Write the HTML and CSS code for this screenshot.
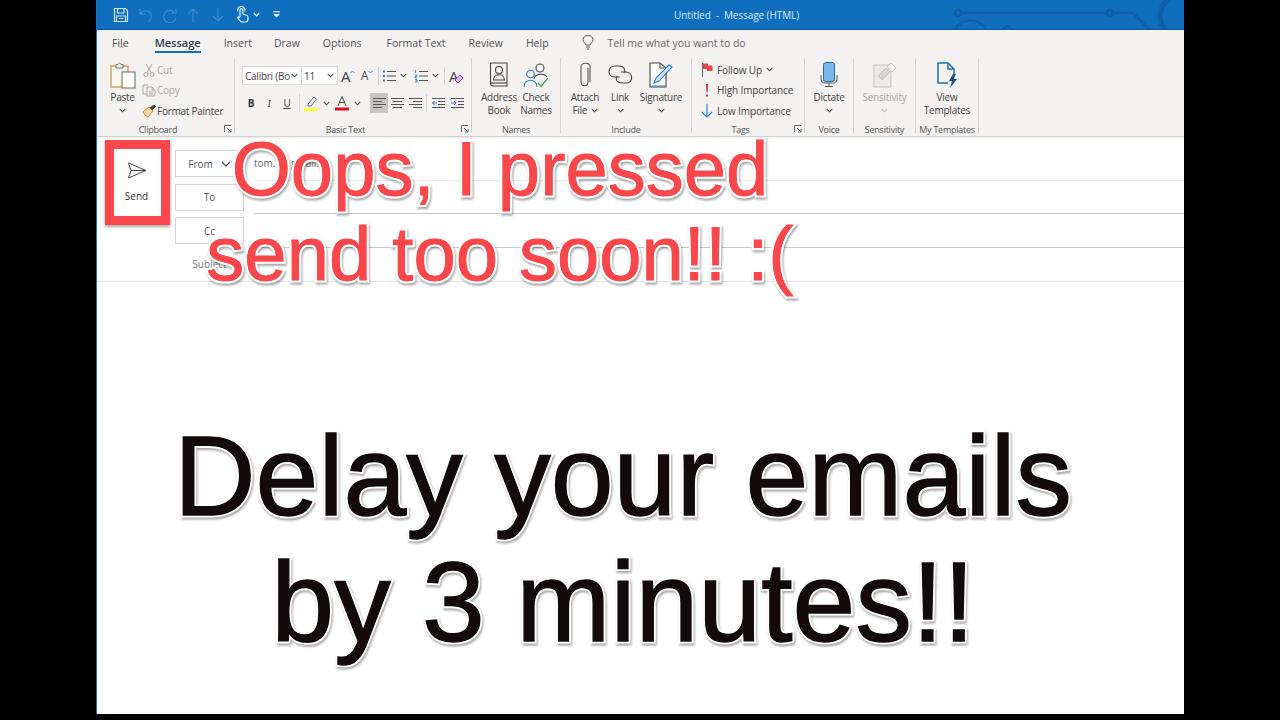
FILE: index.html
```html
<!DOCTYPE html>
<html lang="en">
<head>
    <meta charset="UTF-8">
    <meta name="viewport" content="width=device-width, initial-scale=1.0">
    <title>Untitled - Message (HTML)</title>
    <link rel="stylesheet" href="styles.css">
</head>
<body>

<div class="window">

    <!-- Title bar -->
    <header class="titlebar">
        <svg class="circuit" width="240" height="30" viewBox="0 0 240 30" fill="none" stroke="#0f5ea6" stroke-width="2.5">
            <circle cx="15" cy="13" r="3"/>
            <path d="M18 13H163M170 13H190L207 30"/>
            <circle cx="167" cy="13" r="3"/>
            <path d="M12 31C16 17 38 17 44 31M58 31L64 26L72 31"/>
            <path d="M224 32C212 20 216 2 232 -4" stroke-width="5"/>
        </svg>
        <div class="qat">
            <svg class="qat-save" width="16" height="16" viewBox="0 0 16 16" fill="none" stroke="#cfe3f5" stroke-width="1.2">
                <path d="M1.5 1.5H12.5L14.5 3.5V14.5H1.5Z"/>
                <path d="M4.5 1.5V6H11V1.5M3.5 14.5V9H12.5V14.5M5.5 11.5H10.5"/>
            </svg>
            <svg class="qat-undo" width="14" height="16" viewBox="0 0 14 16" fill="none" stroke="#3f8ccd" stroke-width="1.2">
                <path d="M1 2V7H6M1.5 6.5C4 3.5 8 3 10.5 5C13.5 8 13 12 9 15"/>
            </svg>
            <svg class="qat-redo" width="16" height="16" viewBox="0 0 16 16" fill="none" stroke="#3f8ccd" stroke-width="1.2">
                <path d="M14 2V6H10M13 6A6.3 6.3 0 1 0 14 11"/>
            </svg>
            <svg class="qat-up" width="12" height="16" viewBox="0 0 12 16" fill="none" stroke="#3f8ccd" stroke-width="1.2">
                <path d="M6 15V2M1 7L6 2L11 7"/>
            </svg>
            <svg class="qat-down" width="12" height="16" viewBox="0 0 12 16" fill="none" stroke="#3f8ccd" stroke-width="1.2">
                <path d="M6 1V14M1 9L6 14L11 9"/>
            </svg>
            <svg class="qat-touch" width="14" height="17" viewBox="0 0 14 17" fill="none" stroke="#e4f0fa" stroke-width="1.2">
                <path d="M5 11V4A1.4 1.4 0 0 1 7.8 4V8L11.5 9.2C12.5 9.6 13 10.2 13 11.2V13C13 15 11.8 16 10 16H7.5C6.5 16 5.8 15.5 5 14.6L2.5 11.8C3.2 10.6 4.2 10.6 5 11.5"/>
                <path d="M3 5.5A3.6 3.6 0 1 1 9.6 5.5"/>
            </svg>
            <svg class="qat-chev" width="7" height="5" viewBox="0 0 7 5" fill="none" stroke="#e4f0fa" stroke-width="1.2"><path d="M.8 1L3.5 3.8L6.2 1"/></svg>
            <svg class="qat-more" width="7" height="7" viewBox="0 0 7 7" fill="none" stroke="#e4f0fa" stroke-width="1.1"><path d="M0 .8H7"/><path d="M.8 3L3.5 5.8L6.2 3" fill="#e4f0fa"/></svg>
        </div>
        <div class="window-title">Untitled &nbsp;-&nbsp; Message (HTML)</div>
    </header>

    <!-- Tabs -->
    <nav class="tabs">
        <span class="tab tab-file">File</span>
        <span class="tab tab-message active">Message</span>
        <span class="tab tab-insert">Insert</span>
        <span class="tab tab-draw">Draw</span>
        <span class="tab tab-options">Options</span>
        <span class="tab tab-format">Format Text</span>
        <span class="tab tab-review">Review</span>
        <span class="tab tab-help">Help</span>
        <svg class="tell-icon" width="12" height="15" viewBox="0 0 12 15" fill="none" stroke="#555" stroke-width="1">
            <path d="M3.8 10C3.5 8 1 7.5 1 4.8A5 4.5 0 0 1 11 4.8C11 7.5 8.5 8 8.2 10ZM4.2 12H7.8M5 14H7"/>
        </svg>
        <span class="tell">Tell me what you want to do</span>
    </nav>

    <!-- Ribbon -->
    <section class="ribbon">

        <div class="group g-clipboard">
            <div class="group-body">
                <div class="big b-paste">
                    <div class="big-icon">
                        <svg width="26" height="27" viewBox="0 0 26 27">
                            <rect x="1" y="4" width="17" height="21" fill="#fbf6ee" stroke="#d99b4f" stroke-width="1.4"/>
                            <path d="M6 4.5V2.5H8C8.5 .5 10.500 .5 11 2.500H13V6H6Z" fill="#f3f2f1" stroke="#777"/>
                            <rect x="12" y="10" width="13" height="16" fill="#fff" stroke="#666"/>
                        </svg>
                    </div>
                    <span>Paste</span>
                    <svg class="chev" width="7" height="5" viewBox="0 0 7 5"><path d="M.8 1L3.500 3.800L6.200 1"/></svg>
                </div>
                <div class="small-col">
                    <div class="small disabled">
                        <svg width="14" height="14" viewBox="0 0 14 14" fill="none" stroke="#a9a7a5"><path d="M4 1L9 9.500M10 1L5 9.500"/><circle cx="4" cy="11.500" r="2"/><circle cx="10" cy="11.500" r="2"/></svg>
                        Cut
                    </div>
                    <div class="small disabled">
                        <svg width="14" height="14" viewBox="0 0 14 14" fill="none" stroke="#a9a7a5"><path d="M6 2H1V11H5M5 4H10L13 7V13H5ZM10 4V7H13M7 9H11M7 11H11"/></svg>
                        Copy
                    </div>
                    <div class="small">
                        <svg width="14" height="14" viewBox="0 0 14 14"><path d="M1 8L7 3L11 7L6 13C4 12 2 10 1 8Z" fill="#f6d9a8" stroke="#d9822b"/><path d="M8 4L12 1L13.500 2.500L10 6" fill="#444" stroke="#444"/></svg>
                        Format Painter
                    </div>
                </div>
            </div>
            <div class="group-label"><span>Clipboard</span><svg class="launcher" width="8" height="8" viewBox="0 0 8 8" fill="none" stroke="#666"><path d="M.5 7V.5H7M3 3L7 7M7 4V7H4"/></svg></div>
        </div>

        <div class="group g-basic">
            <div class="group-body basic-rows">
                <div class="tool-row">
                    <div class="combo combo-font">Calibri (Bo<svg class="chev" width="7" height="5" viewBox="0 0 7 5"><path d="M.8 1L3.500 3.800L6.200 1"/></svg></div>
                    <div class="combo combo-size">11<svg class="chev" width="7" height="5" viewBox="0 0 7 5"><path d="M.8 1L3.500 3.800L6.200 1"/></svg></div>
                    <div class="tool w20"><span class="grow">A</span><svg class="mini" width="5" height="4" viewBox="0 0 5 4" fill="none" stroke="#4a8cc7"><path d="M.5 3L2.500 1L4.500 3"/></svg></div>
                    <div class="tool w18"><span class="shrink">A</span><svg class="mini" width="5" height="4" viewBox="0 0 5 4" fill="none" stroke="#4a8cc7"><path d="M.5 1L2.500 3L4.500 1"/></svg></div>
                    <i class="tool-sep ml2"></i>
                    <div class="tool w15 ml2">
                        <svg width="14" height="14" viewBox="0 0 14 14" fill="none" stroke="#555"><path d="M5 2.500H14M5 7H14M5 11.500H14"/><path d="M1 2.500H3M1 7H3M1 11.500H3" stroke="#2b7cd3" stroke-width="2"/></svg>
                    </div>
                    <div class="tool w15"><svg class="chev" width="7" height="5" viewBox="0 0 7 5"><path d="M.8 1L3.500 3.800L6.200 1"/></svg></div>
                    <div class="tool w20">
                        <svg width="14" height="14" viewBox="0 0 14 14" fill="none" stroke="#555"><path d="M5 2.500H14M5 7H14M5 11.500H14"/><path d="M1.500 1V4M1 6H3V7.500H1V9H3M1 10.500H3V13H1M1.500 11.700H3" stroke="#2b7cd3" stroke-width=".8"/></svg>
                    </div>
                    <div class="tool w8"><svg class="chev" width="7" height="5" viewBox="0 0 7 5"><path d="M.8 1L3.500 3.800L6.200 1"/></svg></div>
                    <i class="tool-sep ml5"></i>
                    <div class="tool w22">
                        <span class="clear">A</span>
                        <svg class="eraser" width="8" height="8" viewBox="0 0 8 8"><path d="M0 5L5 0L8 3L3 8Z" fill="#e3b8ee" stroke="#a347ba"/></svg>
                    </div>
                </div>
                <div class="tool-row row-two">
                    <div class="tool w18 tx-bold">B</div>
                    <div class="tool w18 tx-italic">I</div>
                    <div class="tool w18 tx-under">U</div>
                    <i class="tool-sep ml3"></i>
                    <div class="tool w22">
                        <svg width="15" height="16" viewBox="0 0 15 16"><path d="M4 9L10 2L12.500 4L7 11L4 11Z" fill="#fff" stroke="#666"/><path d="M0 13H14V16H0Z" fill="#ffff3b"/></svg>
                    </div>
                    <div class="tool w8"><svg class="chev" width="7" height="5" viewBox="0 0 7 5"><path d="M.8 1L3.500 3.800L6.200 1"/></svg></div>
                    <div class="tool w24">
                        <svg width="14" height="16" viewBox="0 0 14 16"><path d="M3 11L7 1.500L11 11M4.500 7.500H9.500" fill="none" stroke="#444"/><path d="M0 12.500H14V15.500H0Z" fill="#d8121c"/></svg>
                    </div>
                    <div class="tool w6"><svg class="chev" width="7" height="5" viewBox="0 0 7 5"><path d="M.8 1L3.500 3.800L6.200 1"/></svg></div>
                    <div class="tool w18 ml10 tool-on">
                        <svg width="13" height="12" viewBox="0 0 13 12" fill="none" stroke="#555"><path d="M0 1.500H13M0 4.500H9M0 7.500H13M0 10.500H9"/></svg>
                    </div>
                    <div class="tool w18">
                        <svg width="13" height="12" viewBox="0 0 13 12" fill="none" stroke="#555"><path d="M0 1.500H13M2 4.500H11M0 7.500H13M2 10.500H11"/></svg>
                    </div>
                    <div class="tool w18">
                        <svg width="13" height="12" viewBox="0 0 13 12" fill="none" stroke="#555"><path d="M0 1.500H13M4 4.500H13M0 7.500H13M4 10.500H13"/></svg>
                    </div>
                    <i class="tool-sep ml2"></i>
                    <div class="tool w22">
                        <svg width="13" height="12" viewBox="0 0 13 12" fill="none" stroke="#555"><path d="M0 1.500H13M6 4.500H13M6 7.500H13M0 10.500H13"/><path d="M5 6H.5M2.500 4L.5 6L2.500 8" stroke="#2b7cd3"/></svg>
                    </div>
                    <div class="tool w16">
                        <svg width="13" height="12" viewBox="0 0 13 12" fill="none" stroke="#555"><path d="M0 1.500H13M7 4.500H13M7 7.500H13M0 10.500H13"/><path d="M0 6H5M3 4L5 6L3 8" stroke="#2b7cd3"/></svg>
                    </div>
                </div>
            </div>
            <div class="group-label"><span>Basic Text</span><svg class="launcher" width="8" height="8" viewBox="0 0 8 8" fill="none" stroke="#666"><path d="M.5 7V.5H7M3 3L7 7M7 4V7H4"/></svg></div>
        </div>

        <div class="group g-names">
            <div class="group-body">
                <div class="big b-address">
                    <div class="big-icon">
                        <svg width="20" height="26" viewBox="0 0 20 26" fill="none" stroke="#444" stroke-width="1.100">
                            <path d="M2 1H18V24H4C2.500 24 1.500 23 1.500 21.500V2Z"/><path d="M2 21H18"/>
                            <circle cx="10" cy="8" r="3.500"/><path d="M4.500 18C4.500 11 15.500 11 15.500 18Z"/>
                        </svg>
                    </div>
                    <span>Address<br>Book</span>
                </div>
                <div class="big b-check">
                    <div class="big-icon">
                        <svg width="26" height="26" viewBox="0 0 26 26" fill="none" stroke-width="1.100">
                            <circle cx="17" cy="6" r="4" stroke="#444"/>
                            <path d="M11 17C12 11 22 11 24 15" stroke="#444"/>
                            <circle cx="7.500" cy="12" r="3.800" stroke="#2b7cd3"/>
                            <path d="M1 25C1 16 14 16 14 25" stroke="#2b7cd3"/>
                            <path d="M15 21L18 24.500L25 16" stroke="#4fa34d" stroke-width="1.300"/>
                        </svg>
                    </div>
                    <span>Check<br>Names</span>
                </div>
            </div>
            <div class="group-label"><span>Names</span></div>
        </div>

        <div class="group g-include">
            <div class="group-body">
                <div class="big b-attach">
                    <div class="big-icon">
                        <svg width="12" height="26" viewBox="0 0 12 26" fill="none" stroke="#555" stroke-width="1.100">
                            <path d="M9 6V20C9 25 2 25 2 20V5C2 0 11 0 11 5V20"/>
                        </svg>
                    </div>
                    <span>Attach<br>File <svg class="chev" width="7" height="5" viewBox="0 0 7 5"><path d="M.8 1L3.500 3.800L6.200 1"/></svg></span>
                </div>
                <div class="big b-link">
                    <div class="big-icon">
                        <svg width="25" height="20" viewBox="0 0 25 20" fill="none" stroke="#444" stroke-width="1.100">
                            <path d="M12 12H7C-1 12 -1 1 7 1H11C16 1 18 5 16 8"/>
                            <path d="M13 7H18C25 7 26 18 18 18H14C9 18 7 15 9 11"/>
                        </svg>
                    </div>
                    <span>Link</span>
                    <svg class="chev" width="7" height="5" viewBox="0 0 7 5"><path d="M.8 1L3.500 3.800L6.200 1"/></svg>
                </div>
                <div class="big b-signature">
                    <div class="big-icon">
                        <svg width="24" height="26" viewBox="0 0 24 26" fill="none">
                            <path d="M1 1H11L17 6V25H1Z" fill="#fff" stroke="#444" stroke-width="1.100"/>
                            <path d="M11 1V6H15" stroke="#444"/>
                            <path d="M5 21L7 16L20 3L23 5L10 19Z" fill="#cfe4f7" stroke="#2b7cd3" stroke-width="1.100"/>
                            <path d="M3 24H16" stroke="#2b7cd3"/>
                        </svg>
                    </div>
                    <span>Signature</span>
                    <svg class="chev" width="7" height="5" viewBox="0 0 7 5"><path d="M.8 1L3.500 3.800L6.200 1"/></svg>
                </div>
            </div>
            <div class="group-label"><span>Include</span></div>
        </div>

        <div class="group g-tags">
            <div class="group-body small-col">
                <div class="small">
                    <svg width="12" height="15" viewBox="0 0 12 15"><path d="M1.500 1V15" stroke="#666" fill="none"/><path d="M2 1.500H7V3.500H11.500V9H6V7H2Z" fill="#e8474c"/></svg>
                    Follow Up <svg class="chev tag-chev" width="7" height="5" viewBox="0 0 7 5"><path d="M.8 1L3.500 3.800L6.200 1"/></svg>
                </div>
                <div class="small">
                    <svg width="12" height="15" viewBox="0 0 12 15"><path d="M5 1H7L6.600 9.500H5.400ZM5 11.500H7V13.500H5Z" fill="#e02b33"/></svg>
                    High Importance
                </div>
                <div class="small">
                    <svg width="12" height="15" viewBox="0 0 12 15" fill="none" stroke="#2b7cd3" stroke-width="1.100"><path d="M6 .5V14M1 9L6 14L11 9"/></svg>
                    Low Importance
                </div>
            </div>
            <div class="group-label"><span>Tags</span><svg class="launcher" width="8" height="8" viewBox="0 0 8 8" fill="none" stroke="#666"><path d="M.5 7V.5H7M3 3L7 7M7 4V7H4"/></svg></div>
        </div>

        <div class="group g-voice">
            <div class="group-body center">
                <div class="big">
                    <div class="big-icon">
                        <svg width="18" height="26" viewBox="0 0 18 26" fill="none">
                            <rect x="3.500" y=".5" width="11" height="19" rx="2.500" fill="#79b6f0" stroke="#2b6cb0"/>
                            <path d="M1 13V17C1 20 3 21 5 21H13C15 21 17 20 17 17V13M9 21V24M5 24.500H13" stroke="#555"/>
                        </svg>
                    </div>
                    <span>Dictate</span>
                    <svg class="chev" width="7" height="5" viewBox="0 0 7 5"><path d="M.8 1L3.500 3.800L6.200 1"/></svg>
                </div>
            </div>
            <div class="group-label"><span>Voice</span></div>
        </div>

        <div class="group g-sensitivity">
            <div class="group-body center">
                <div class="big disabled">
                    <div class="big-icon">
                        <svg width="24" height="26" viewBox="0 0 24 26" fill="none" stroke="#c4c2c0">
                            <path d="M1 3H18V25H1Z" fill="#eceae8"/>
                            <path d="M5 14L13 6L17 10L9 18Z" fill="#d8d6d4"/>
                            <path d="M14 5L18 1L23 6L19 10Z" fill="#f3f2f1"/>
                        </svg>
                    </div>
                    <span>Sensitivity</span>
                    <svg class="chev chev-off" width="7" height="5" viewBox="0 0 7 5"><path d="M.8 1L3.500 3.800L6.200 1"/></svg>
                </div>
            </div>
            <div class="group-label"><span>Sensitivity</span></div>
        </div>

        <div class="group g-templates">
            <div class="group-body center">
                <div class="big">
                    <div class="big-icon">
                        <svg width="22" height="27" viewBox="0 0 22 27" fill="none">
                            <path d="M12 21H2V1H12L18 7V12M12 1V7H18" stroke="#1f6fb5" stroke-width="1.500"/>
                            <path d="M17 12L13 19H16L14 26L21 17H17.500L20 12Z" fill="#14558f"/>
                        </svg>
                    </div>
                    <span>View<br>Templates</span>
                </div>
            </div>
            <div class="group-label"><span>My Templates</span></div>
        </div>
    </section>

    <!-- Compose form -->
    <section class="compose">
        <div class="send-box">
            <svg width="20" height="17" viewBox="0 0 20 17" fill="none" stroke="#444" stroke-width="1">
                <path d="M1.500 1L19 8.500L1.500 16L4 8.500ZM4 8.500H19"/>
            </svg>
            <span>Send</span>
        </div>
        <div class="fields">
            <div class="field-row">
                <div class="addr-btn">From <svg class="from-chev" width="10" height="6" viewBox="0 0 10 6" fill="none" stroke="#444" stroke-width="1.100"><path d="M1 1L5 5L9 1"/></svg></div>
                <div class="addr-input light">tom.&nbsp;&nbsp;&nbsp;&nbsp;&nbsp;&nbsp;gmail.co</div>
            </div>
            <div class="field-row">
                <div class="addr-btn">To</div>
                <div class="addr-input"></div>
            </div>
            <div class="field-row">
                <div class="addr-btn">Cc</div>
                <div class="addr-input"></div>
            </div>
            <div class="field-row">
                <div class="subject">Subject</div>
            </div>
        </div>
    </section>

    <div class="body-area"></div>
</div>

<!-- Captions on top of the screenshot -->
<div class="caption caption-red" data-text="Oops, I pressed
send too soon!! :(">Oops, I pressed
send too soon!! :(</div>
<div class="caption caption-black" data-text="Delay your emails
by 3 minutes!!">Delay your emails
by 3 minutes!!</div>

</body>
</html>
```

FILE: styles.css
```css
/* Basic Reset */
* {
    margin: 0;
    padding: 0;
    box-sizing: border-box;
}

body {
    background: #000;
    font-family: 'Open Sans', 'Noto Sans', Arial, sans-serif;
    color: #444;
    width: 1280px;
    height: 720px;
    overflow: hidden;
    position: relative;
}

.window {
    margin-left: 96px;
    width: 1088px;
    height: 714px;
    background: #fff;
    border-left: 1px solid #1f6fb5;
    display: flex;
    flex-direction: column;
}

/* Title bar */
.titlebar {
    height: 30px;
    background: #106ebe;
    border-bottom: 1px solid #0d5a9e;
    color: #d7e8f7;
    display: flex;
    align-items: center;
    position: relative;
    overflow: hidden;
}

.circuit {
    position: absolute;
    left: 846px;
    top: 0;
}

.qat {
    display: flex;
    align-items: center;
    width: 577px;
    padding-left: 16px;
}

.qat-undo { margin-left: 10px; }
.qat-redo { margin-left: 9px; }
.qat-up { margin-left: 9px; }
.qat-down { margin-left: 13px; }
.qat-touch { margin-left: 11px; }
.qat-chev { margin-left: 4px; }
.qat-more { margin-left: 13px; }

.window-title {
    font-size: 10px;
    white-space: nowrap;
    position: relative;
    letter-spacing: -.08px;
}

/* Tabs */
.tabs {
    height: 27px;
    background: #f3f2f1;
    display: flex;
    align-items: center;
    font-size: 10.5px;
    color: #505050;
    padding: 0 0 2px 15px;
}

.tab {
    position: relative;
    white-space: nowrap;
}

.tab.active {
    color: #2f3f4f;
    font-weight: 600;
    font-size: 11px;
}

.tab.active::after {
    content: "";
    position: absolute;
    left: 0;
    right: 0;
    bottom: -3px;
    height: 2px;
    background: #106ebe;
}

.tab-message { margin-left: 26px; }
.tab-insert { margin-left: 23px; }
.tab-draw { margin-left: 22px; }
.tab-options { margin-left: 23px; }
.tab-format { margin-left: 25px; }
.tab-review { margin-left: 23px; }
.tab-help { margin-left: 23px; }
.tell-icon { margin-left: 33px; }
.tell { margin-left: 14px; color: #666; }

/* Ribbon */
.ribbon {
    height: 80px;
    background: #f3f2f1;
    border-bottom: 1px solid #d4d2d0;
    box-shadow: 0 1px 2px rgba(0, 0, 0, 0.08);
    display: flex;
    font-size: 10px;
    letter-spacing: -.25px;
    padding-bottom: 3px;
    position: relative;
}

.group {
    display: flex;
    flex-direction: column;
    border-right: 1px solid #d4d2d0;
    margin-top: 1px;
    padding-top: 1px;
    flex: none;
}

.g-clipboard { width: 138px; }
.g-basic { width: 237px; }
.g-names { width: 89px; }
.g-include { width: 131px; }
.g-tags { width: 113px; letter-spacing: -.12px; }
.g-voice { width: 49px; }
.g-sensitivity { width: 62px; }
.g-templates { width: 63px; }

.group-body {
    flex: 1;
    display: flex;
    min-height: 0;
}

.group-body.center { justify-content: center; }

.g-clipboard .group-body { padding-left: 13px; }
.g-names .group-body { padding-left: 6px; }
.g-include .group-body { padding-left: 6px; }
.g-tags .group-body { padding-left: 9px; }

.group-label {
    height: 14px;
    margin-bottom: -3px;
    display: flex;
    align-items: center;
    font-size: 9px;
    letter-spacing: -.25px;
    color: #555;
    white-space: nowrap;
}

.group-label span {
    flex: 1;
    text-align: center;
}

.launcher {
    margin: 0 2px 0 5px;
    flex: none;
}

/* Big buttons */
.big {
    display: flex;
    flex-direction: column;
    align-items: center;
    text-align: center;
    line-height: 13px;
    flex: none;
    white-space: nowrap;
}

.big .chev { margin-top: 4px; }
.big span .chev { margin: 0 0 1px 1px; }

.big-icon {
    height: 32px;
    display: flex;
    align-items: center;
    justify-content: center;
}

.b-paste { width: 25px; }
.b-address { width: 42px; }
.b-check { width: 32px; }
.b-attach { width: 36px; }
.b-link { width: 34px; }
.b-signature { width: 48px; }

.chev {
    fill: none;
    stroke: #555;
    stroke-width: 1.1;
    flex: none;
}

.chev-off { stroke: #bdbbb9; }
.tag-chev { margin-left: 3px; }

.disabled { color: #a9a7a5; }

/* Small buttons */
.small-col {
    display: flex;
    flex-direction: column;
    margin-left: 7px;
    padding-top: .5px;
}

.small {
    height: 20.5px;
    display: flex;
    align-items: center;
    gap: 1px;
    white-space: nowrap;
}

.g-tags .small svg:first-child { margin-right: 3px; }

.group-body.small-col { margin-left: 0; }

/* Basic text rows */
.basic-rows {
    flex-direction: column;
    padding: 7px 0 0 7px;
    gap: 8px;
}

.tool-row {
    display: flex;
    align-items: center;
    height: 19px;
}

.row-two { height: 20px; }

.combo {
    height: 19px;
    background: #fff;
    border: 1px solid #dcdad8;
    display: flex;
    align-items: center;
    justify-content: space-between;
    padding: 0 3px 0 2px;
    font-size: 10px;
    white-space: nowrap;
    overflow: hidden;
    flex: none;
}

.combo-font { width: 60px; }
.combo-size { width: 36px; border-left: 0; }

.tool {
    height: 20px;
    display: flex;
    align-items: center;
    justify-content: center;
    flex: none;
    position: relative;
}

.w6 { width: 6px; }
.w8 { width: 8px; }
.w15 { width: 15px; }
.w16 { width: 16px; }
.w18 { width: 18px; }
.w20 { width: 20px; }
.w22 { width: 22px; }
.w24 { width: 24px; }
.ml2 { margin-left: 2px; }
.ml3 { margin-left: 3px; }
.ml5 { margin-left: 5px; }
.ml10 { margin-left: 10px; }

.tool-on { background: #c8c6c4; }

.tool-sep {
    width: 1px;
    height: 18px;
    background: #d4d2d0;
    flex: none;
}

.grow { font-size: 15px; color: #444; }
.shrink { font-size: 12px; color: #444; }
.clear { font-size: 15px; color: #444; margin-right: 5px; }

.mini {
    align-self: flex-start;
    margin-top: 4px;
}

.eraser {
    position: absolute;
    right: 4px;
    bottom: 3px;
}

.tx-bold { font-weight: 700; font-size: 10px; color: #333; }
.tx-italic { font-style: italic; font-size: 10px; font-family: 'Liberation Serif', serif; }
.tx-under { text-decoration: underline; font-size: 10px; }

/* Compose form */
.compose {
    height: 145px;
    border-bottom: 1px solid #e4e4e4;
    display: flex;
    align-items: flex-start;
}

.send-box {
    width: 65px;
    height: 85px;
    margin: 3px 0 0 8px;
    border: 9px solid #f9474b;
    box-shadow: 0 2px 3px rgba(0, 0, 0, 0.35);
    display: flex;
    flex-direction: column;
    align-items: center;
    font-size: 10px;
    color: #333;
    padding: 13px 2px 0 0;
    gap: 10px;
    flex: none;
}

.fields {
    flex: 1;
    margin: 10px 0 0 5px;
}

.field-row {
    height: 33.5px;
    display: flex;
    align-items: center;
}

.addr-btn {
    width: 69px;
    height: 27px;
    border: 1px solid #d4d4d4;
    font-size: 10px;
    color: #555;
    display: flex;
    align-items: center;
    justify-content: center;
    gap: 8px;
    flex: none;
}

.from-chev { flex: none; }

.addr-input {
    flex: 1;
    height: 100%;
    margin-left: 10px;
    border-bottom: 1px solid #c8c8c8;
    font-size: 10px;
    color: #666;
    display: flex;
    align-items: center;
    white-space: nowrap;
}

.addr-input.light { border-bottom-color: #ececec; }

.subject {
    width: 69px;
    text-align: center;
    font-size: 10px;
    color: #777;
}

.body-area {
    flex: 1;
}

/* Captions: white outline behind, then a thin stroke on top to fatten the letters */
.caption {
    position: absolute;
    white-space: pre;
    text-align: center;
    font-family: 'Liberation Sans', Arial, sans-serif;
    paint-order: stroke fill;
    -webkit-text-stroke: 5px #fff;
    filter: drop-shadow(1px 2px 1px rgba(0, 0, 0, 0.35));
}

.caption::after {
    content: attr(data-text);
    position: absolute;
    left: 0;
    right: 0;
    top: 0;
}

.caption-red {
    left: 100px;
    width: 800px;
    top: 126px;
    font-size: 76px;
    line-height: 85px;
    color: #f9474b;
}

.caption-red::after {
    -webkit-text-stroke: .8px #f9474b;
}

.caption-black {
    left: 123px;
    width: 1000px;
    top: 413px;
    font-size: 113px;
    line-height: 126px;
    color: #140a0c;
}

.caption-black::after {
    -webkit-text-stroke: 1.3px #140a0c;
}
```
